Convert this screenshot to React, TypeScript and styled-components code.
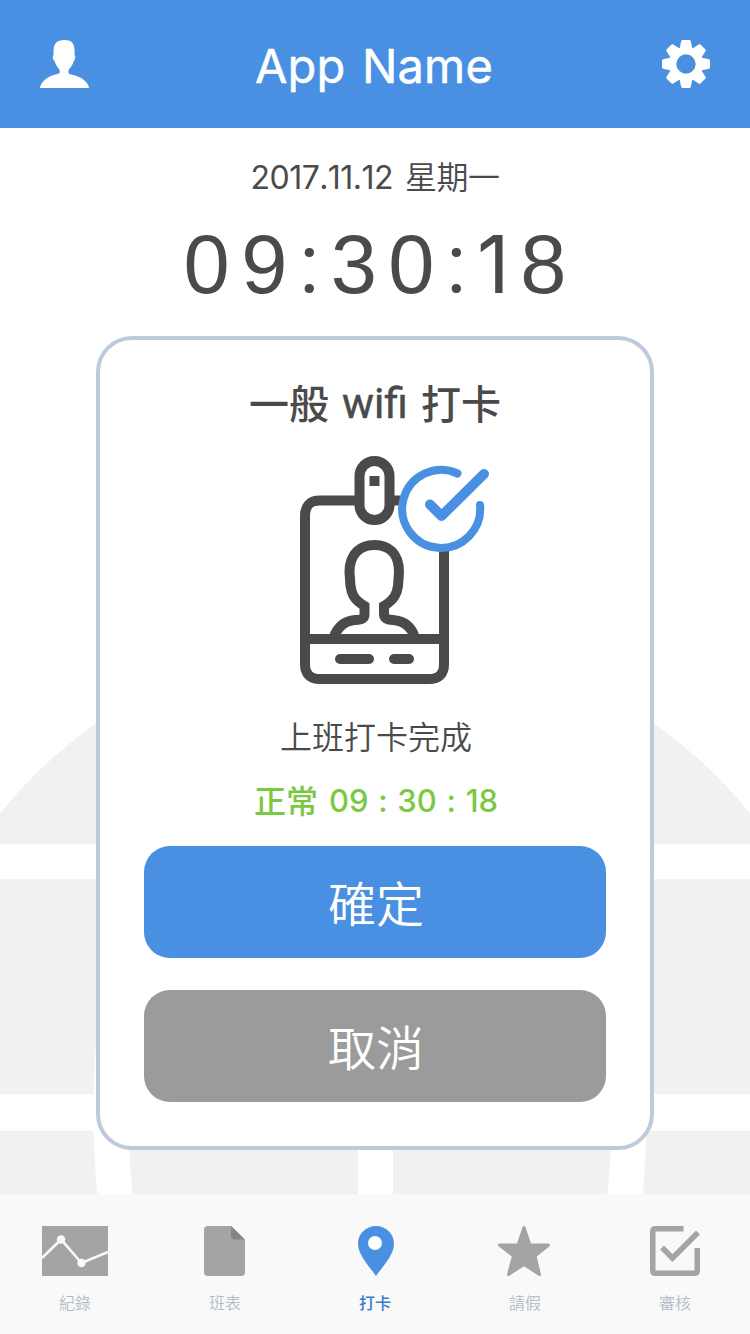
import React from "react";
import styled, { createGlobalStyle } from "styled-components";

const cjk = `"Noto Sans CJK TC", sans-serif`;

const GlobalStyle = createGlobalStyle`
  * { box-sizing: border-box; }
  body { margin: 0; background: #fff; font-family: Inter, ${cjk}; color: #4a4a4a; }
`;

const Screen = styled.div`
  position: relative;
  width: 750px;
  height: 1334px;
  display: flex;
  flex-direction: column;
  background: #fff;
  overflow: hidden;
`;

const Globe = styled.svg`
  position: absolute;
  left: 0;
  top: 600px;
`;

const Header = styled.header`
  height: 128px;
  flex: none;
  display: flex;
  align-items: center;
  justify-content: space-between;
  padding: 0 39px;
  background: #4a90e2;
  color: #fff;
`;

const Title = styled.h1`
  margin: 4px 2px 0 0;
  font: 400 47px/60px Inter, sans-serif;
  letter-spacing: 0.2px;
  word-spacing: 3px;
  -webkit-text-stroke: 0.5px #fff;
`;

const Main = styled.main`
  position: relative;
  flex: 1;
  display: flex;
  flex-direction: column;
  align-items: center;
`;

const DateLine = styled.div`
  margin-top: 28px;
  height: 44px;
  display: flex;
  align-items: center;
  gap: 12px;
  font-size: 32px;
  line-height: 44px;
`;

const Run = styled.span<{
  $font?: string;
  $spacing?: number;
  $size?: number;
  $weight?: number;
  $shift?: number;
  $stroke?: number;
}>`
  font-family: ${(p) => p.$font ?? "Inter"}, ${cjk};
  letter-spacing: ${(p) => (p.$spacing ? `${p.$spacing}px` : "normal")};
  font-kerning: none;
  font-feature-settings: "calt" 0;
  ${(p) => p.$size && `font-size: ${p.$size}px;`}
  ${(p) => p.$weight && `font-weight: ${p.$weight};`}
  ${(p) => p.$shift && `margin-top: ${p.$shift}px;`}
  ${(p) => p.$stroke && `-webkit-text-stroke: ${p.$stroke}px currentColor;`}
`;

const Clock = styled.div`
  display: flex;
  align-items: baseline;
  margin-top: 14px;
  height: 100px;
  font: 400 83px/100px "Liberation Sans", sans-serif;
`;

const Digit = styled.span<{ $width: number; $char: string }>`
  width: ${(p) => p.$width}px;
  display: flex;
  justify-content: center;
  ${(p) => p.$char === ":" && "font-family: Roboto, sans-serif;"}
  ${(p) => p.$char === "1" && "font-family: Inter, sans-serif; font-size: 80px;"}
`;

const Card = styled.section`
  width: 558px;
  height: 814px;
  margin-top: 22px;
  border: 4px solid #bccadb;
  border-radius: 36px;
  background: #fff;
  display: flex;
  flex-direction: column;
  align-items: center;
`;

const CardTitle = styled.h2`
  margin: 36px 0 0;
  height: 56px;
  display: flex;
  align-items: center;
  gap: 13px;
  font-size: 40px;
  line-height: 56px;
  font-weight: 500;
`;

const Badge = styled.svg`
  margin: 22px 0 0 40px;
  flex: none;
`;

const Message = styled.p`
  margin: 27px 0 0 2px;
  font: 350 32px/44px ${cjk};
`;

const Status = styled.div`
  margin: 20px 0 0 2px;
  height: 44px;
  display: flex;
  align-items: center;
  gap: 11px;
  font-size: 32px;
  line-height: 44px;
  font-weight: 500;
  word-spacing: 1.5px;
  color: #7ac943;
`;

const Button = styled.button<{ $color: string; $gap: number }>`
  width: 462px;
  height: 112px;
  flex: none;
  margin-top: ${(p) => p.$gap}px;
  padding: 0 0 3px 2px;
  border: 0;
  border-radius: 26px;
  background: ${(p) => p.$color};
  color: #fff;
  font: 350 48px/66px ${cjk};
`;

const TabBar = styled.nav`
  position: relative;
  height: 140px;
  flex: none;
  display: grid;
  grid-template-columns: repeat(5, 1fr);
  background: #f9f9f9;
`;

const Tab = styled.div<{ $active?: boolean }>`
  display: flex;
  flex-direction: column;
  align-items: center;
  gap: 15px;
  padding-top: 32px;
  font: ${(p) => (p.$active ? 500 : 350)} 16px/22px ${cjk};
  color: ${(p) => (p.$active ? "#3a7bc8" : "#b4bccb")};
  svg { display: block; overflow: visible; }
`;

const clockCells: [string, number][] = [
  ["0", 57.5], ["9", 58], [":", 32], ["3", 57], ["0", 58], [":", 32], ["1", 42], ["8", 58],
];

export default function App() {
  return (
    <>
      <GlobalStyle />
      <Screen>
        <Globe width="750" height="600" viewBox="0 600 750 600">
          <circle cx="375" cy="1117" r="482.5" fill="#f1f1f1" />
          <g fill="none" stroke="#fff">
            <path d="M0 861.5H750" strokeWidth="35" />
            <path d="M0 1112.5H750" strokeWidth="36.5" />
            <path d="M375.5 620V1200" strokeWidth="35" />
            <ellipse cx="370" cy="1112" rx="259" ry="470" strokeWidth="35" />
          </g>
        </Globe>
        <Header>
          <svg width="50" height="48" viewBox="0 0 50 48" fill="#fff">
            <path d="M25.500 0c7.500 0 10 4 10 10v5c1.400 1 .8 4.500-.9 6.200-.7 3.300-3 6.300-5.100 8.800v2.400c0 1.300 1.500 1.700 3.500 2.300C42 36.300 49.500 42 50 48H1c.5-6 8-12 16.500-13.800 2-.5 3.200-1 3.200-2v-2.300c-2.200-2.700-4.300-5.400-5.100-8.700-1.900-1.700-2.400-5.200-1-6.200v-5c0-6 3-10 10.900-10z" />
          </svg>
          <Title>App Name</Title>
          <svg width="50" height="48" viewBox="-25 -24 50 48" fill="#fff">
            {[0, 45, 90, 135, 180, 225, 270, 315].map((a) => (
              <path key={a} transform={`rotate(${a})`} d="M-6.500 -15L-4.800 -22.800Q-4.500 -24 -3.500 -24H3.500Q4.500 -24 4.800 -22.800L6.500 -15Z" />
            ))}
            <circle r="13.300" fill="none" stroke="#fff" strokeWidth="7.200" />
          </svg>
        </Header>
        <Main>
          <DateLine>
            <Run $size={32} $weight={400} $spacing={-0.55}>2017.11.12</Run>
            <Run $font="Noto Sans CJK TC" $spacing={-0.5} $weight={350} $shift={-6}>星期一</Run>
          </DateLine>
          <Clock>
            {clockCells.map(([c, w], i) => <Digit key={i} $width={w} $char={c}>{c}</Digit>)}
          </Clock>
          <Card>
            <CardTitle>
              <Run $font="Noto Sans CJK TC" $shift={-5}>一般</Run>
              <Run $font="Roboto" $weight={400} $size={42.5} $stroke={0.5}>wifi</Run>
              <Run $font="Noto Sans CJK TC" $shift={-5}>打卡</Run>
            </CardTitle>
            <Badge width="192" height="232" viewBox="299 454 192 232" fill="none" stroke="#4a4a4a" strokeWidth="10">
              <path d="M359 500.500H320Q305 500.500 305 516V664Q305 679 320 679H429Q444 679 444 664V540M390 500.500H405" />
              <rect x="359.500" y="461" width="30" height="59" rx="15" />
              <rect x="369.500" y="476" width="10" height="10" fill="#4a4a4a" stroke="none" />
              <path d="M305 639H444" />
              <path d="M340 659H369M394 659H409" strokeLinecap="round" />
              <path d="M333.500 638C337 628 343 621 355 620C361 620 364.500 619 364.500 614V606C353 599 351.500 593 350.500 586L349.500 572C349.500 553 361 545 374.500 545C388 545 399 553 399 572L398 586C397 593 395 599 384 606V614C384 618 387 620 393 620C406 621 412 628 415 638" />
              <g stroke="#4a90e2" strokeLinecap="round" strokeLinejoin="round">
                <circle cx="441" cy="509" r="39" fill="#fff" stroke="none" />
                <path d="M457.500 473.500A39 39 0 1 0 480 505" strokeWidth="8" />
                <path d="M430 504.500L441.500 516L484 474" strokeWidth="10" />
              </g>
            </Badge>
            <Message>上班打卡完成</Message>
            <Status>
              <Run $font="Noto Sans CJK TC">正常</Run>
              <Run $weight={500} $size={31} $shift={4}>09 : 30 : 18</Run>
            </Status>
            <Button $color="#4a90e2" $gap={25}>確定</Button>
            <Button $color="#9b9b9b" $gap={32}>取消</Button>
          </Card>
        </Main>
        <TabBar>
          <Tab>
            <svg width="66" height="50" viewBox="0 0 66 50">
              <path d="M0 0H66V50H0z" fill="#a4a4a4" />
              <path d="M0 32L19 13.500L39.500 37L66 26" fill="none" stroke="#f9f9f9" strokeWidth="2.600" />
              <circle cx="19" cy="13.500" r="4.200" fill="#f9f9f9" />
              <circle cx="39.500" cy="37" r="4.200" fill="#f9f9f9" />
            </svg>
            紀錄
          </Tab>
          <Tab>
            <svg width="42" height="50" viewBox="0 0 42 50">
              <path d="M4 0H27L41 14V46Q41 50 37 50H4Q0 50 0 46V4Q0 0 4 0z" fill="#a4a4a4" />
              <path d="M27 0L41 13.500H31Q27 13.500 27 9.500z" fill="#858585" />
            </svg>
            班表
          </Tab>
          <Tab $active>
            <svg width="36" height="50" viewBox="-1 0 36 50">
              <path d="M18 0C8 0 0 8 0 17.500C0 29 11 40 18 50C25 40 36 29 36 17.500C36 8 28 0 18 0z" fill="#4a90e2" />
              <circle cx="17" cy="17" r="7" fill="#fff" />
            </svg>
            打卡
          </Tab>
          <Tab>
            <svg width="52" height="50" viewBox="1 0 52 50">
              <path d="M26 1.500L32 19H50.500L37 30L41.500 48.500L26 38.500L10.500 48.500L15.500 30L1.500 19H20z" fill="#a4a4a4" stroke="#a4a4a4" strokeWidth="3" strokeLinejoin="round" />
            </svg>
            請假
          </Tab>
          <Tab>
            <svg width="50" height="50" viewBox="0 0 50 50" fill="none" stroke="#a4a4a4" strokeWidth="5.500">
              <path d="M33.500 2.750H5.500Q2.750 2.750 2.750 5.500V44.500Q2.750 47.250 5.500 47.250H44.500Q47.250 47.250 47.250 44.500V22" />
              <path d="M12 21.500L22.500 32L48 6.500" />
            </svg>
            審核
          </Tab>
        </TabBar>
      </Screen>
    </>
  );
}
